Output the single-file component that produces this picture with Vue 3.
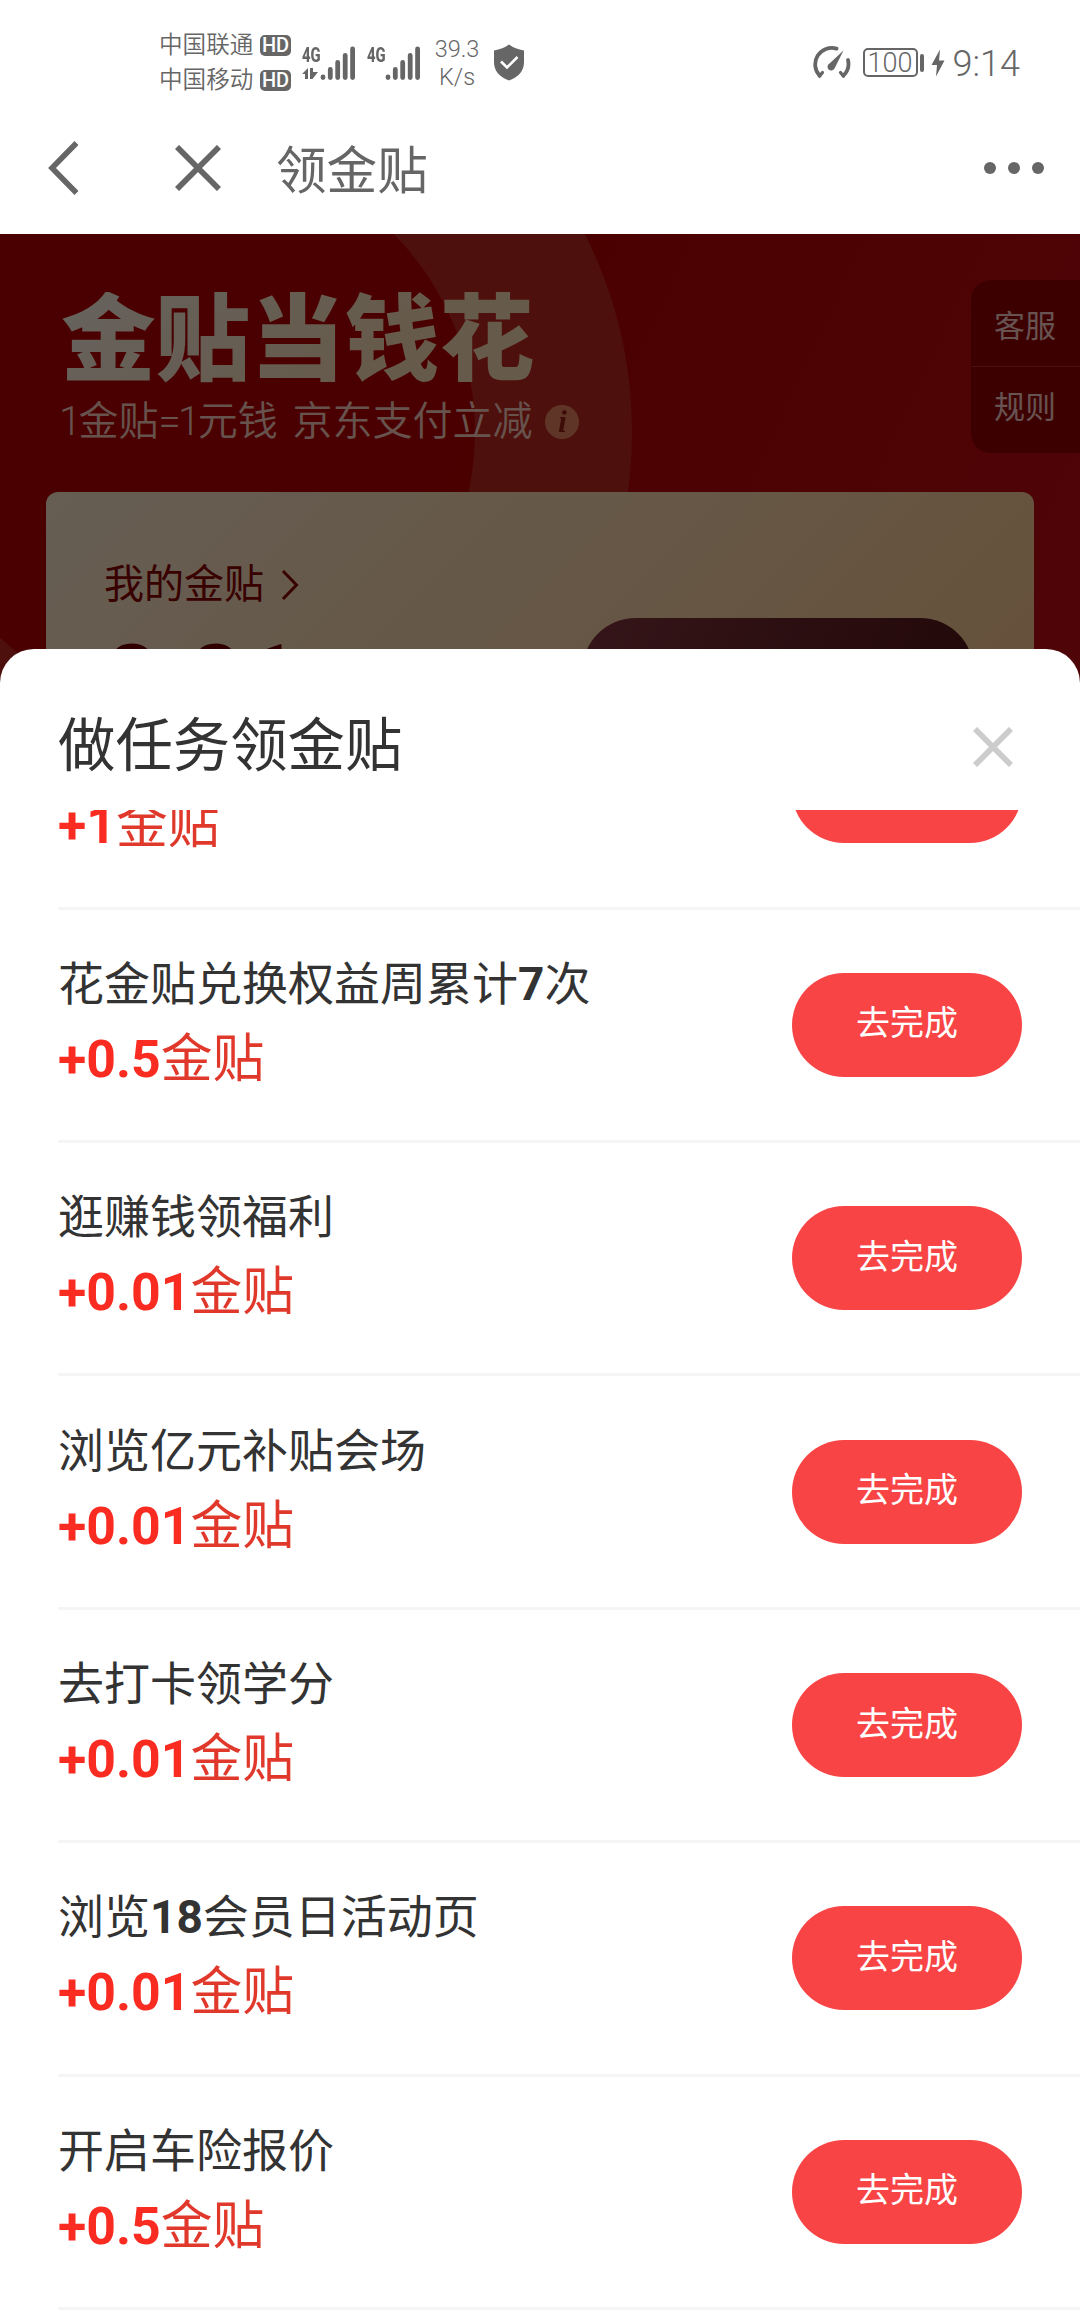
<template>
  <div class="taskPage">
    <!-- 状态栏 -->
    <div class="statusBar">
      <div class="carriers">
        <div v-for="name in carriers" :key="name" class="carrier">
          <span class="carrierName">{{ name }}</span>
          <span class="hdTag">HD</span>
        </div>
      </div>
      <div class="signal">
        <div class="network">
          <span class="networkType">4G</span>
          <svg class="dataArrows" width="16" height="11" viewBox="0 0 16 11">
            <path d="M0 6 L6 0 V11 H3 V6 Z M8 0 H11 V4 H16 L10.5 11 H8 Z" fill="#666" />
          </svg>
        </div>
        <svg class="bars" width="36" height="34" viewBox="0 0 36 34">
          <path :d="barPath" stroke="#666" stroke-width="4.8" stroke-linecap="round" />
        </svg>
      </div>
      <div class="signal second">
        <div class="network">
          <span class="networkType">4G</span>
        </div>
        <svg class="bars" width="36" height="34" viewBox="0 0 36 34">
          <path :d="barPath" stroke="#666" stroke-width="4.8" stroke-linecap="round" />
        </svg>
      </div>
      <div class="speed">
        <span>39.3</span>
        <span>K/s</span>
      </div>
      <svg class="shield" width="32" height="37" viewBox="0 0 32 37">
        <path d="M16 0.5 Q22 5 31 6.5 V18 Q31 31 16 36.5 Q1 31 1 18 V6.5 Q10 5 16 0.5 Z" fill="#666" />
        <path d="M8 17.5 L14 23.5 L24.5 13" fill="none" stroke="#fff" stroke-width="2.6" />
      </svg>
      <div class="statusRight">
        <svg class="gauge" width="40" height="36" viewBox="0 0 40 36">
          <path d="M24.5 3.6 A16.5 16.5 0 0 0 7.5 30.5 M36 15 A16.5 16.5 0 0 1 31.5 30.5" fill="none" stroke="#666" stroke-width="3.8" stroke-linecap="round" />
          <path d="M7.5 31.2 L10.5 27.5 M31.5 31.2 L28.5 27.5" stroke="#666" stroke-width="3.2" stroke-linecap="round" />
          <path d="M31.5 5.5 L22.5 23.5 A3.7 3.7 0 1 1 17.5 18.5 Z" fill="#666" />
        </svg>
        <div class="battery">100</div>
        <span class="batteryTip"></span>
        <svg class="bolt" width="14" height="28" viewBox="0 0 14 28">
          <path d="M9 0.5 L0.5 16 H6 L5 27.5 L13.5 11.5 H8 Z" fill="#666" />
        </svg>
        <span class="time">9:14</span>
      </div>
    </div>

    <!-- 导航栏 -->
    <header class="navBar">
      <svg class="backIcon" width="32" height="56" viewBox="0 0 32 56">
        <path d="M28.5 3 L4 28 L28.5 53" fill="none" stroke="#666" stroke-width="5.6" />
      </svg>
      <svg class="closeIcon" width="46" height="46" viewBox="0 0 46 46">
        <path d="M2 2 L44 44 M44 2 L2 44" stroke="#666" stroke-width="5.8" />
      </svg>
      <h1>领金贴</h1>
      <div class="moreBtn">
        <i v-for="n in 3" :key="n"></i>
      </div>
    </header>

    <!-- 活动头图 -->
    <section class="hero">
      <svg class="heroRing" width="1080" height="480" viewBox="0 0 1080 480">
        <circle cx="193" cy="198" r="360.5" fill="none" stroke="#c42a1e" stroke-width="157" />
      </svg>
      <div class="heroText">
        <h2>金贴当钱花</h2>
        <p class="subTitle">
          <span><em>1</em>金贴<em>=1</em>元钱 京东支付立减</span>
          <span class="infoIcon">i</span>
        </p>
      </div>
      <div class="sideMenu">
        <span>客服</span>
        <span>规则</span>
      </div>
      <div class="balanceCard">
        <div class="balanceLeft">
          <div class="balanceLabel">
            我的金贴
            <svg width="18" height="32" viewBox="0 0 18 32">
              <path d="M2 2 L15.5 16 L2 30" fill="none" stroke="#8e0000" stroke-width="3" />
            </svg>
          </div>
          <div class="balanceNum">0.01</div>
        </div>
        <div class="useBtn"></div>
      </div>
      <div class="mask"></div>
    </section>

    <!-- 任务弹层 -->
    <section class="taskSheet">
      <div class="sheetHeader">
        <h3>做任务领金贴</h3>
        <svg width="40" height="40" viewBox="0 0 40 40">
          <path d="M2 2 L38 38 M38 2 L2 38" stroke="#ccc" stroke-width="5.8" />
        </svg>
      </div>
      <div class="taskList">
        <div v-for="task in tasks" :key="task.id" class="taskItem">
          <div class="taskInfo">
            <div class="taskName">
              <span v-for="(part, i) in splitName(task.name)" :key="i" :class="{ num: isNum(part) }">{{ part }}</span>
            </div>
            <div class="taskReward"><b>+{{ task.reward }}</b>金贴</div>
          </div>
          <button class="goBtn" @click="finish(task)">去完成</button>
        </div>
      </div>
    </section>
  </div>
</template>

<script setup>
import { ref } from 'vue'

const carriers = ['中国联通', '中国移动']
const barPath = 'M3 31 V31.5 M10.3 23.5 V31.5 M17.7 16.5 V31.5 M25.2 9.5 V31.5 M32.6 3 V31.5'

const tasks = ref([
  { id: 1, name: '', reward: '1' },
  { id: 2, name: '花金贴兑换权益周累计7次', reward: '0.5' },
  { id: 3, name: '逛赚钱领福利', reward: '0.01' },
  { id: 4, name: '浏览亿元补贴会场', reward: '0.01' },
  { id: 5, name: '去打卡领学分', reward: '0.01' },
  { id: 6, name: '浏览18会员日活动页', reward: '0.01' },
  { id: 7, name: '开启车险报价', reward: '0.5' }
])

const splitName = (name) => {//数字单独加粗
  return name.split(/(\d+)/).filter(s => s !== '')
}

const isNum = (part) => /^\d+$/.test(part)

const finish = (task) => {//去完成
  task.clicked = true
}
</script>

<style>
body {
  margin: 0;
  background: #fff;
}
</style>

<style scoped>
.taskPage {
  position: relative;
  width: 1080px;
  height: 2310px;
  overflow: hidden;
  background: #fff;
  font-family: Roboto, 'Noto Sans CJK SC', sans-serif;
  color: #333;
}

h1, h2, h3, p {
  margin: 0;
  font-weight: 400;
}

svg {
  display: block;
  flex-shrink: 0;
}

/* 状态栏 */
.statusBar {
  height: 124px;
  box-sizing: border-box;
  padding: 1px 60px 0 159px;
  display: flex;
  align-items: center;
  color: #666;
}

.carriers {
  width: 132px;
}

.carrier {
  height: 35px;
  display: flex;
  align-items: center;
  justify-content: space-between;
}

.carrierName {
  font-size: 23.6px;
  line-height: 35px;
  font-weight: 350;
  white-space: nowrap;
}

.hdTag {
  width: 31px;
  height: 21px;
  border-radius: 5px;
  background: #666;
  color: #fff;
  font-size: 20px;
  font-weight: 500;
  line-height: 21px;
  text-align: center;
}

.signal {
  display: flex;
  align-items: flex-end;
  height: 34px;
  margin-left: 11px;
}

.signal.second {
  margin-left: 11px;
}

.network {
  width: 18px;
  height: 34px;
}

.networkType {
  display: block;
  font-size: 20px;
  font-weight: 800;
  line-height: 18px;
  transform: scaleX(0.74);
  transform-origin: left;
}

.dataArrows {
  margin-top: 4px;
}

.speed {
  width: 60px;
  margin-left: 6px;
  display: flex;
  flex-direction: column;
  align-items: center;
  font-size: 23.5px;
  line-height: 28px;
  font-weight: 350;
}

.shield {
  margin-left: 6px;
}

.statusRight {
  margin-left: auto;
  display: flex;
  align-items: center;
}

.battery {
  width: 55px;
  height: 29px;
  margin-left: 11px;
  box-sizing: border-box;
  border: 2px solid #666;
  border-radius: 5px;
  font-size: 27px;
  line-height: 26px;
  font-weight: 350;
  text-align: center;
}

.batteryTip {
  width: 4px;
  height: 18px;
  margin-left: 2px;
  border-radius: 2px;
  background: #666;
}

.bolt {
  margin-left: 7px;
}

.time {
  margin-left: 8px;
  padding-top: 2px;
  font-size: 36px;
  line-height: 40px;
  font-weight: 350;
}

/* 导航栏 */
.navBar {
  height: 110px;
  box-sizing: border-box;
  padding: 0 36px 22px 48px;
  display: flex;
  align-items: center;
}

.closeIcon {
  margin-left: 95px;
}

h1 {
  margin-left: 55px;
  padding-top: 8px;
  font-size: 50.6px;
  line-height: 66px;
  color: #666;
}

.moreBtn {
  margin-left: auto;
  display: flex;
  gap: 12px;
}

.moreBtn i {
  width: 12px;
  height: 12px;
  border-radius: 50%;
  background: #666;
}

/* 活动头图 */
.hero {
  position: relative;
  height: 480px;
  box-sizing: border-box;
  padding: 58px 46px 0;
  overflow: hidden;
  background: linear-gradient(115deg, #ba0000 40%, #c60c14 100%);
}

.heroRing {
  position: absolute;
  left: 0;
  top: 0;
}

.heroText {
  position: relative;
  height: 200px;
  padding-left: 15px;
}

h2 {
  width: 480px;
  font-size: 94.6px;
  line-height: 98px;
  font-weight: 900;
  white-space: nowrap;
  background: linear-gradient(135deg, #fff6ea 0%, #ffe0b8 70%);
  -webkit-background-clip: text;
  background-clip: text;
  color: transparent;
}

.subTitle {
  display: flex;
  align-items: center;
  margin: 5px 0 0 -2px;
  font-size: 40px;
  line-height: 54px;
  font-weight: 350;
  color: #ffd0c0;
  word-spacing: 5px;
  white-space: nowrap;
}

.subTitle em {
  font-style: normal;
  letter-spacing: -2.6px;
}

.infoIcon {
  width: 34px;
  height: 34px;
  margin-left: 13px;
  border-radius: 50%;
  background: #ffa880;
  opacity: 0.72;
  color: #8c1a10;
  font-family: 'Liberation Serif', serif;
  font-size: 32px;
  font-weight: 700;
  font-style: italic;
  line-height: 33px;
  text-align: center;
}

.sideMenu {
  position: absolute;
  right: 0;
  top: 46px;
  width: 109px;
  border-radius: 20px 0 0 20px;
  overflow: hidden;
  background: #980000;
}

.sideMenu span {
  display: block;
  height: 86px;
  padding-left: 23px;
  font-size: 31px;
  line-height: 93px;
  color: #ffd0cc;
}

.sideMenu span + span {
  line-height: 82px;
  border-top: 1px solid #b82c2c;
}

.balanceCard {
  position: relative;
  height: 260px;
  box-sizing: border-box;
  padding: 0 60px 0 58px;
  display: flex;
  justify-content: space-between;
  border-radius: 12px;
  background: linear-gradient(135deg, #ffead0 0%, #ffca90 100%);
}

.balanceLabel {
  display: flex;
  align-items: center;
  gap: 17px;
  padding-top: 64px;
  font-size: 40px;
  line-height: 58px;
  font-weight: 400;
  color: #8e0000;
}

.balanceNum {
  margin-top: 18px;
  font-size: 97px;
  line-height: 97px;
  font-weight: 700;
  color: #780000;
}

.useBtn {
  width: 392px;
  height: 108px;
  margin-top: 126px;
  border-radius: 54px;
  background: linear-gradient(115deg, #86363f, #541416);
}

.mask {
  position: absolute;
  left: 0;
  top: 0;
  width: 100%;
  height: 100%;
  background: rgba(0, 0, 0, 0.6);
}

/* 任务弹层 */
.taskSheet {
  position: absolute;
  left: 0;
  bottom: 0;
  width: 100%;
  height: 1661px;
  border-radius: 34px 34px 0 0;
  overflow: hidden;
  background: #fff;
  display: flex;
  flex-direction: column;
}

.sheetHeader {
  height: 161px;
  flex-shrink: 0;
  box-sizing: border-box;
  padding: 34px 67px 0 58px;
  display: flex;
  align-items: center;
  justify-content: space-between;
}

h3 {
  font-size: 57.4px;
  line-height: 80px;
}

.taskList {
  flex: 1;
  min-height: 0;
  overflow: hidden;
  display: flex;
  flex-direction: column;
  justify-content: flex-end;
}

.taskItem {
  height: 233.4px;
  flex-shrink: 0;
  box-sizing: border-box;
  margin-left: 58px;
  padding-right: 58px;
  border-bottom: 3px solid #f5f5f5;
  display: flex;
  align-items: center;
  justify-content: space-between;
}

.taskName {
  height: 66px;
  font-size: 46px;
  line-height: 63px;
}

.num {
  font-weight: 700;
}

.taskReward {
  margin-top: 4px;
  font-size: 51.8px;
  line-height: 74px;
  color: #e1382c;
}

.taskReward b {
  font-weight: 700;
  color: #fa2c22;
}

.goBtn {
  width: 230px;
  height: 104px;
  padding: 0 0 8px;
  border: none;
  border-radius: 52px;
  background: #f94445;
  color: #fff;
  font-family: inherit;
  font-size: 34px;
  cursor: pointer;
}
</style>
